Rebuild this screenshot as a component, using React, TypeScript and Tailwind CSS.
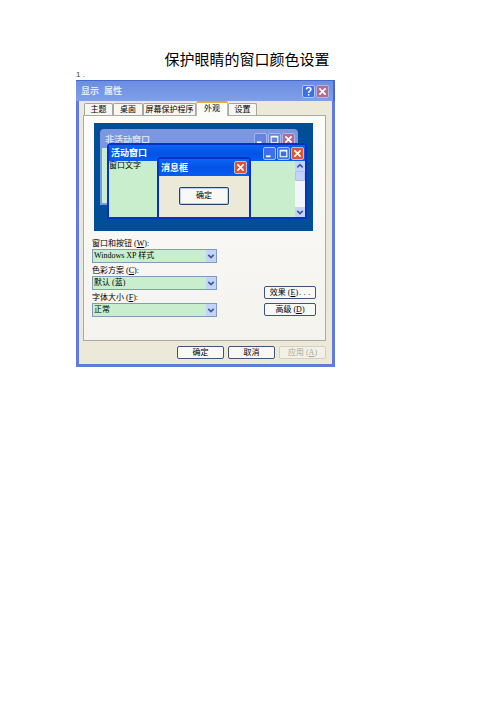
import type { ReactNode } from "react";

const tabs = [
  { label: "主题", width: "w-[29px]" },
  { label: "桌面", width: "w-[30px]" },
  { label: "屏幕保护程序", width: "w-[53px]" },
  { label: "外观", width: "w-8", active: true },
  { label: "设置", width: "w-[29px]" },
];

const fields = [
  { id: "style", label: "窗口和按钮", hotkey: "W", value: "Windows XP 样式" },
  { id: "scheme", label: "色彩方案", hotkey: "C", value: "默认 (蓝)" },
  { id: "size", label: "字体大小", hotkey: "F", value: "正常" },
];

function Hotkey({ letter }: { letter: string }) {
  return (
    <span className="ml-[2px] font-['Liberation_Serif','Noto_Sans_CJK_SC',serif]">
      (<u>{letter}</u>)
    </span>
  );
}

function CaptionIcon({ kind, faded = false }: { kind: "min" | "max" | "close" | "help"; faded?: boolean }) {
  const fill = kind === "close" ? (faded ? "#b56c8c" : "#e0532f") : faded ? "#6684dc" : "#3c70e6";
  return (
    <svg viewBox="0 0 13 13" className="size-[13px] shrink-0" aria-hidden="true">
      <rect x="0.5" y="0.5" width="12" height="12" rx="1.5" fill={fill} stroke={faded ? "#aebbed" : "#b9cbfa"} strokeWidth="0.9" />
      {kind === "min" && <path d="M3 9.3h4.5" stroke="#fff" strokeWidth="1.8" />}
      {kind === "max" && <path d="M3.2 3.2h6.6v6.6H3.2zM3 4h7" fill="none" stroke="#fff" strokeWidth="1.1" />}
      {kind === "close" && <path d="M3.4 3.4l6.2 6.2M9.6 3.4L3.4 9.6" stroke="#fff" strokeWidth="1.7" />}
      {kind === "help" && (
        <>
          <path d="M4.4 4.6c0-2.7 4.5-2.7 4.5 0 0 1.6-2.3 1.5-2.3 3.3" fill="none" stroke="#fff" strokeWidth="1.5" />
          <path d="M6.6 9v1.5" stroke="#fff" strokeWidth="1.6" />
        </>
      )}
    </svg>
  );
}

function Chevron({ up = false }: { up?: boolean }) {
  return (
    <svg viewBox="0 0 10 10" className="size-2.5 bg-[#c3d3fb]" aria-hidden="true">
      <path d={up ? "M2.3 6.3L5 3.6l2.7 2.7" : "M2.3 3.8L5 6.5l2.7-2.7"} fill="none" stroke="#42598c" strokeWidth="1.7" />
    </svg>
  );
}

function XpButton({ children, className = "", disabled = false }: { children: ReactNode; className?: string; disabled?: boolean }) {
  const tone = disabled ? "border-[#d3d0c0] bg-[#f3f1e7] text-[#aaa796]" : "border-[#3d5578] bg-[#f8f8f5] text-black";
  return (
    <button
      type="button"
      disabled={disabled}
      className={`flex h-[13px] items-center justify-center rounded-[2px] border whitespace-nowrap ${tone} ${className}`}
    >
      {children}
    </button>
  );
}

function Preview() {
  return (
    <div className="relative h-[108px] overflow-hidden bg-[#004e98]">
      {/* inactive window */}
      <div className="absolute top-1.5 left-1.5 h-[76px] w-[198px] rounded-t-[4px] border-2 border-[#7b97e0] bg-[#c8eecd]">
        <div className="flex h-[17px] items-center justify-between bg-[#7b97e0] pr-px pl-[3px] text-[9px] font-bold text-[#d5dff8]">
          <span>非活动窗口</span>
          <span className="flex gap-px">
            <CaptionIcon kind="min" faded />
            <CaptionIcon kind="max" faded />
            <CaptionIcon kind="close" faded />
          </span>
        </div>
      </div>

      {/* active window */}
      <div className="absolute top-5 left-[13px] flex h-[76px] w-[200px] flex-col rounded-t-[4px] border-2 border-[#0831c4] bg-[#c8eecd]">
        <div className="flex h-4 shrink-0 items-center justify-between bg-linear-to-b from-[#0c64f4] via-[#0453e4] to-[#055cf4] pr-px pl-[2px] text-[9px] font-bold text-white">
          <span>活动窗口</span>
          <span className="flex gap-px">
            <CaptionIcon kind="min" />
            <CaptionIcon kind="max" />
            <CaptionIcon kind="close" />
          </span>
        </div>
        <div className="flex min-h-0 flex-1 justify-between">
          <span className="text-[8px] leading-[10px]">窗口文字</span>
          <div className="flex w-2.5 flex-col bg-[#f4f5fb]">
            <Chevron up />
            <div className="h-2.5 rounded-[1px] border border-[#aebff0] bg-[#c3d3fb]" />
            <div className="mt-auto flex">
              <Chevron />
            </div>
          </div>
        </div>
      </div>

      {/* message box */}
      <div className="absolute top-[34px] left-[63px] h-[62px] w-[94px] rounded-t-[4px] border-2 border-[#0831c4] bg-[#ece9d8]">
        <div className="flex h-[17px] items-center justify-between bg-linear-to-b from-[#0c64f4] via-[#0453e4] to-[#055cf4] px-[2px] text-[9px] font-bold text-white">
          <span>消息框</span>
          <CaptionIcon kind="close" />
        </div>
        <div className="flex justify-center pt-[11px]">
          <button type="button" className="h-[18px] w-[50px] rounded-[2px] border border-[#24436f] bg-[#f8f8f5] text-[8px] shadow-[inset_0_0_0_1px_#b9cdf2]">
            确定
          </button>
        </div>
      </div>
    </div>
  );
}

function Dialog() {
  return (
    <section className="w-full max-w-[259px] border-x-[3px] border-b-[3px] border-[#5f7bdb] bg-[#ece9d8] text-[8px] leading-[10px] text-black">
      <header className="-mx-[3px] flex h-[21px] items-center justify-between border-t border-r-2 border-[#4468d0] bg-linear-to-b from-[#6d8ee0] to-[#7f9fe9] pr-1 pl-[5px] text-[9px] font-bold text-[#e4ebfc]">
        <h2 className="flex gap-[5px]">
          <span>显示</span>
          <span>属性</span>
        </h2>
        <div className="flex gap-px">
          <button type="button" aria-label="帮助">
            <CaptionIcon kind="help" />
          </button>
          <button type="button" aria-label="关闭">
            <CaptionIcon kind="close" faded />
          </button>
        </div>
      </header>

      <div className="pr-1.5 pl-1">
        <nav className="flex h-[14px] items-end pl-px" role="tablist">
          {tabs.map((tab) => (
            <button
              key={tab.label}
              type="button"
              role="tab"
              aria-selected={!!tab.active}
              className={`${tab.width} rounded-t-[2px] border border-b-0 whitespace-nowrap ${
                tab.active
                  ? "relative -mb-px h-[15px] border-[#b9bcae] border-t-2 border-t-[#e9a83a] bg-[#fbfbf9] pb-[2px]"
                  : "h-3 border-[#a2a99c] bg-[#f7f6f0]"
              }`}
            >
              {tab.label}
            </button>
          ))}
        </nav>

        <div className="border border-[#a9ada0] bg-linear-to-b from-[#fcfcfb] to-[#f4f3ee] pt-[7px] pr-3 pb-[23px] pl-[10px]">
          <Preview />
          <div className="-mr-[3px] -ml-[2px] flex items-end justify-between pt-2">
            <div className="flex flex-col gap-[3px]">
              {fields.map((field) => (
                <div key={field.id}>
                  <label htmlFor={field.id} className="block">
                    {field.label}
                    <Hotkey letter={field.hotkey} />:
                  </label>
                  <div className="relative flex w-[125px]">
                    <select
                      id={field.id}
                      defaultValue={field.value}
                      className="h-[14px] w-full appearance-none border border-[#7f9db9] bg-[#c8eecd] px-px font-['Liberation_Serif','Noto_Sans_CJK_SC',serif] text-[8px] leading-3"
                    >
                      <option>{field.value}</option>
                    </select>
                    <span className="pointer-events-none absolute top-px right-px flex h-3 items-center bg-[#c3d3fb]">
                      <Chevron />
                    </span>
                  </div>
                </div>
              ))}
            </div>
            <div className="flex flex-col gap-1 pb-px">
              <XpButton className="w-[52px]">
                效果
                <Hotkey letter="E" />
                <span className="ml-px">. . .</span>
              </XpButton>
              <XpButton className="w-[52px]">
                高级
                <Hotkey letter="D" />
              </XpButton>
            </div>
          </div>
        </div>

        <footer className="flex justify-end gap-1 py-[5px]">
          <XpButton className="w-[47px]">确定</XpButton>
          <XpButton className="w-[47px]">取消</XpButton>
          <XpButton className="w-[47px]" disabled>
            应用
            <Hotkey letter="A" />
          </XpButton>
        </footer>
      </div>
    </section>
  );
}

export default function App() {
  return (
    <main className="min-h-screen bg-white px-[76px] pt-[50px] font-['Liberation_Sans','Noto_Sans_CJK_SC',sans-serif] text-black">
      <h1 className="pr-1.5 text-center text-[15px] leading-5">保护眼睛的窗口颜色设置</h1>
      <p className="text-[8px] leading-[10px] text-[#444]">1 .</p>
      <Dialog />
    </main>
  );
}
